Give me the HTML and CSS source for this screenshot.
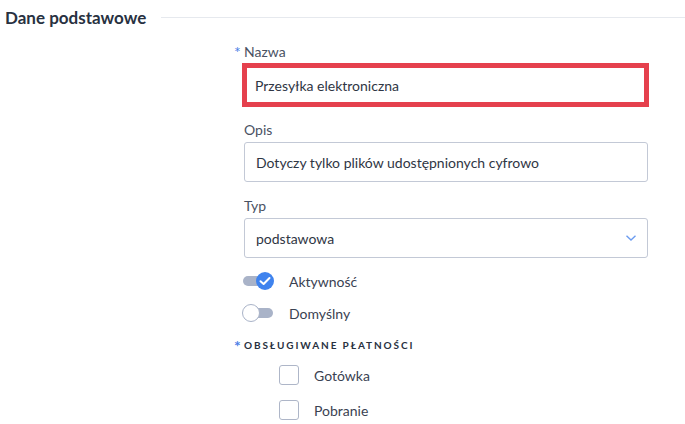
FILE: index.html
```html
<!DOCTYPE html>
<html lang="pl">
<head>
<meta charset="utf-8">
<title>Dane podstawowe</title>
<link rel="stylesheet" href="styles.css">
</head>
<body>
<div class="section-head">
  <h2 class="section-title">Dane podstawowe</h2>
  <div class="section-line"></div>
</div>
<div class="form">
  <div class="field">
    <label class="label"><span class="req">*</span>Nazwa</label>
    <div class="input input-error">Przesyłka elektroniczna</div>
  </div>
  <div class="field">
    <label class="label">Opis</label>
    <div class="input">Dotyczy tylko plików udostępnionych cyfrowo</div>
  </div>
  <div class="field">
    <label class="label">Typ</label>
    <div class="input select">
      <span>podstawowa</span>
      <svg class="chevron" width="12" height="8" viewBox="0 0 12 8"><path d="M1.5 1.8 L6 6 L10.5 1.8" fill="none" stroke="#6c9cf0" stroke-width="1.4"/></svg>
    </div>
  </div>
  <div class="toggle-row">
    <span class="toggle on"><span class="knob"><svg width="12" height="10" viewBox="0 0 12 10"><path d="M1.5 5.2 L4.6 8 L10.5 2" fill="none" stroke="#fff" stroke-width="2" stroke-linecap="round" stroke-linejoin="round"/></svg></span></span>
    <span class="toggle-text">Aktywność</span>
  </div>
  <div class="toggle-row">
    <span class="toggle off"><span class="knob"></span></span>
    <span class="toggle-text">Domyślny</span>
  </div>
  <div class="group-title"><span class="req">*</span>OBSŁUGIWANE PŁATNOŚCI</div>
  <div class="check-row"><span class="checkbox"></span><span class="check-text">Gotówka</span></div>
  <div class="check-row"><span class="checkbox"></span><span class="check-text">Pobranie</span></div>
</div>
</body>
</html>
```
FILE: styles.css
```css
html, body {
  margin: 0;
  padding: 0;
  background: #ffffff;
}
body {
  font-family: Lato, "Open Sans", sans-serif;
  color: #3a4252;
  width: 685px;
  height: 424px;
  overflow: hidden;
}
.section-head {
  display: flex;
  align-items: center;
  height: 35px;
  padding-left: 5px;
}
.section-title {
  margin: 0;
  font-size: 17px;
  font-weight: 700;
  color: #283141;
  white-space: nowrap;
}
.section-line {
  flex: 1;
  height: 1px;
  background: #e6e9ee;
  margin-left: 15px;
}
.form {
  margin-left: 244px;
  width: 404px;
  padding-top: 7px;
}
.field {
  margin-bottom: 14px;
}
.label {
  display: block;
  height: 20px;
  line-height: 20px;
  font-size: 14px;
  color: #4a5263;
  margin-bottom: 2px;
}
.req {
  display: inline-block;
  width: 10px;
  margin-left: -10px;
  color: #4d7fe6;
  font-size: 16px;
  line-height: 14px;
  vertical-align: top;
  padding-top: 3px;
}
.input {
  box-sizing: border-box;
  height: 40px;
  border: 1px solid #c3c9d6;
  border-radius: 3px;
  padding: 0 11px;
  display: flex;
  align-items: center;
  font-size: 14px;
  color: #2f3644;
}
.input-error {
  height: 44px;
  width: 407px;
  margin-left: -2px;
  margin-top: -1px;
  border: 5px solid #e5404d;
  border-radius: 0;
  padding: 0 8px;
}
.field:first-child {
  margin-bottom: 13px;
}
.select {
  justify-content: space-between;
}
.chevron {
  margin-right: -1px;
}
.toggle-row {
  display: flex;
  align-items: center;
  height: 20px;
  margin-top: -1px;
  margin-bottom: 13px;
}
.toggle {
  position: relative;
  width: 30px;
  height: 10px;
  border-radius: 5px;
  background: #a9b3c8;
  margin-left: -1px;
  flex: none;
}
.knob {
  position: absolute;
  top: -4px;
  width: 18px;
  height: 18px;
  box-sizing: border-box;
  border-radius: 50%;
  display: flex;
  align-items: center;
  justify-content: center;
}
.toggle.on .knob {
  left: 13px;
  background: #3f83ee;
}
.toggle.off .knob {
  left: -1px;
  background: #ffffff;
  border: 1px solid #a9b3c8;
}
.toggle-text {
  margin-left: 16px;
  font-size: 14px;
  color: #3a4252;
}
.group-title {
  height: 20px;
  line-height: 20px;
  font-size: 10px;
  font-weight: 700;
  letter-spacing: 1.9px;
  color: #283141;
  margin-top: -1px;
  margin-bottom: 10px;
}
.group-title .req {
  letter-spacing: 0;
  padding-top: 4px;
}
.check-row {
  display: flex;
  align-items: center;
  height: 20px;
  margin-left: 35px;
  margin-bottom: 15px;
}
.checkbox {
  box-sizing: border-box;
  width: 20px;
  height: 20px;
  border: 1px solid #aeb6c8;
  border-radius: 3px;
  flex: none;
}
.check-text {
  margin-left: 15px;
  font-size: 14px;
  color: #3a4252;
}
```
